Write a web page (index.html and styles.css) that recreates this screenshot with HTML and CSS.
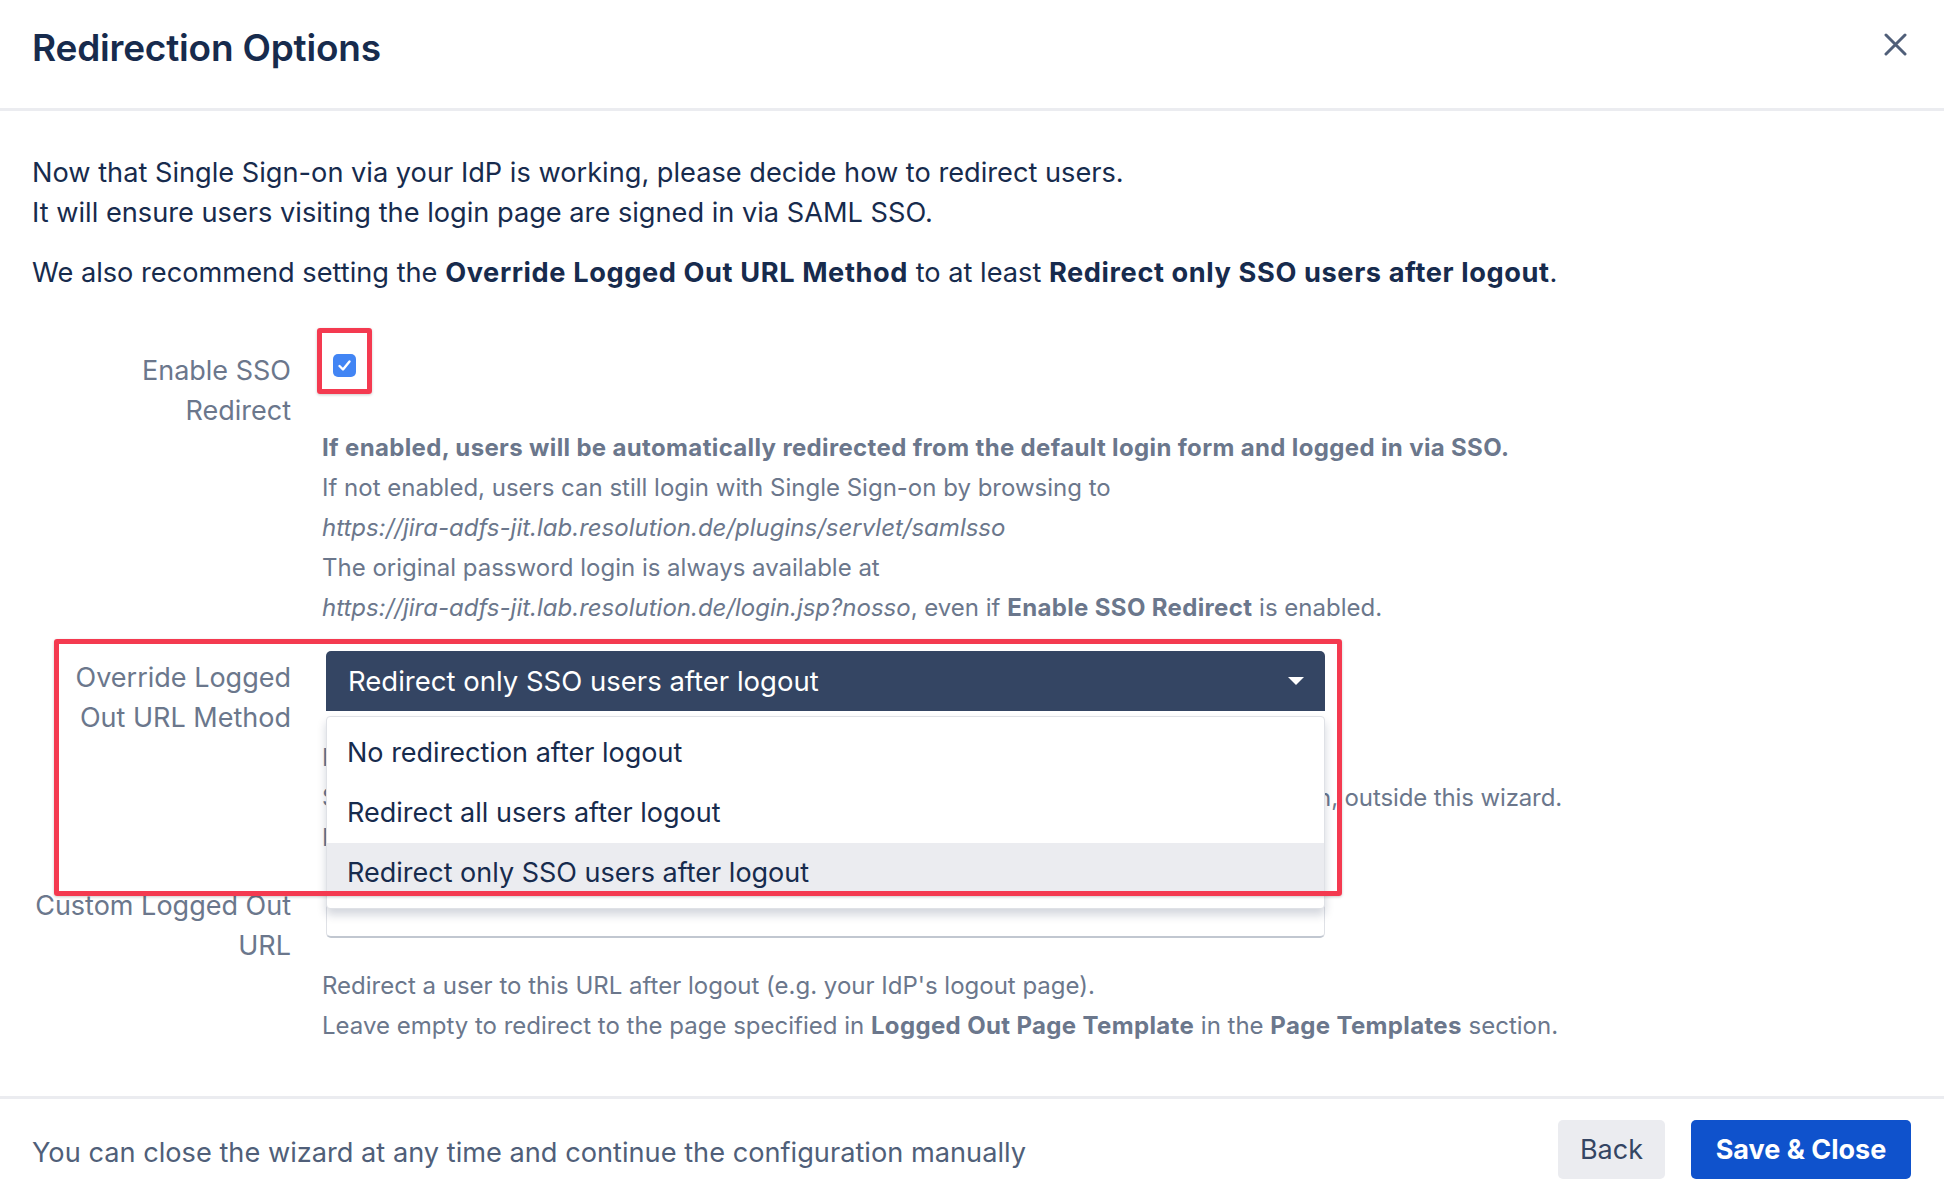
FILE: index.html
```html
<!DOCTYPE html>
<html lang="en">
  <head>
    <meta charset="UTF-8" />
    <meta name="viewport" content="width=device-width, initial-scale=1.0" />
    <title>Redirection Options</title>
    <link rel="stylesheet" href="styles.css">
  </head>
  <body>
    <div class="modal">
      <header class="modal-header">
        <h1 class="modal-title">Redirection Options</h1>
        <button class="close-btn" type="button" aria-label="Close">
          <svg width="23" height="23" viewBox="0 0 23 23">
            <path d="M2 2 L21 21 M21 2 L2 21" stroke="#505f79" stroke-width="3" stroke-linecap="round" fill="none"/>
          </svg>
        </button>
      </header>

      <div class="modal-body">
        <p class="intro">Now that Single Sign-on via your IdP is working, please decide how to redirect users.<br>It will ensure users visiting the login page are signed in via SAML SSO.</p>
        <p class="intro">We also recommend setting the <b>Override Logged Out URL Method</b> to at least <b>Redirect only SSO users after logout</b>.</p>

        <form class="form">
          <div class="field-row row-sso">
            <label class="field-label">Enable SSO<br>Redirect</label>
            <div class="field-body">
              <span class="cb-wrap">
                <span class="cb">
                  <svg width="23" height="23" viewBox="0 0 23 23">
                    <path d="M6.5 12 L10 15.5 L16.5 7.5" stroke="#fff" stroke-width="2.4" stroke-linecap="round" stroke-linejoin="round" fill="none"/>
                  </svg>
                </span>
              </span>
              <p class="help"><b>If enabled, users will be automatically redirected from the default login form and logged in via SSO.</b><br>If not enabled, users can still login with Single Sign-on by browsing to<br><i>https://jira-adfs-jit.lab.resolution.de/plugins/servlet/samlsso</i><br>The original password login is always available at<br><i>https://jira-adfs-jit.lab.resolution.de/login.jsp?nosso</i>, even if <b>Enable SSO Redirect</b> is enabled.</p>
            </div>
          </div>

          <div class="field-row row-override">
            <label class="field-label">Override Logged<br>Out URL Method</label>
            <div class="field-body">
              <div class="select-wrap">
                <div class="select">
                  <span>Redirect only SSO users after logout</span>
                  <svg width="16" height="8" viewBox="0 0 16 8"><polygon points="0,0 16,0 8,8" fill="#fff"/></svg>
                </div>
                <ul class="menu">
                  <li class="menu-item">No redirection after logout</li>
                  <li class="menu-item">Redirect all users after logout</li>
                  <li class="menu-item is-active">Redirect only SSO users after logout</li>
                </ul>
              </div>
              <p class="help help-under">If set, users are redirected to the Custom Logged Out URL below after logout.<br><span class="tight">Select No redirection to use the Logged Out Page Template in the Page Templates section, outside this wizard.</span><br>In most cases, Redirect only SSO users after logout is the recommended setting here.</p>
            </div>
            <div class="highlight"></div>
          </div>

          <div class="field-row row-custom">
            <label class="field-label">Custom Logged Out<br>URL</label>
            <div class="field-body">
              <div class="text-input"></div>
              <p class="help help-under">Redirect a user to this URL after logout (e.g. your IdP's logout page).<br>Leave empty to redirect to the page specified in <b>Logged Out Page Template</b> in the <b>Page Templates</b> section.</p>
            </div>
          </div>
        </form>
      </div>

      <footer class="modal-footer">
        <span class="footer-note">You can close the wizard at any time and continue the configuration manually</span>
        <div class="actions">
          <button class="btn btn-back" type="button">Back</button>
          <button class="btn btn-save" type="button">Save &amp; Close</button>
        </div>
      </footer>
    </div>
  </body>
</html>
```

FILE: styles.css
```css
*, *::before, *::after { box-sizing: border-box; }
body {
  margin: 0;
  font-family: Inter, "Noto Sans", sans-serif;
  background: #fff;
  color: #172b4d;
}
.modal {
  width: 1944px;
  height: 1194px;
  display: flex;
  flex-direction: column;
  overflow: hidden;
}

/* header */
.modal-header {
  height: 111px;
  border-bottom: 3px solid #ebecf0;
  display: flex;
  justify-content: space-between;
  align-items: flex-start;
  padding: 25px 37px 0 32px;
}
.modal-title {
  margin: 0;
  font-size: 37px;
  line-height: 46px;
  font-weight: 600;
  letter-spacing: -0.2px;
}
.close-btn {
  border: 0;
  background: none;
  padding: 0;
  margin-top: 8px;
  width: 23px;
  height: 23px;
  cursor: pointer;
}
.close-btn svg { display: block; }

/* body */
.modal-body {
  flex: 1;
  padding: 42px 32px 0;
}
.intro {
  margin: 0 0 20px;
  font-size: 27.2px;
  line-height: 40px;
}
.intro b {
  font-weight: 700;
  letter-spacing: 0.6px;
}
.form { margin-top: 58px; }
.field-row {
  display: flex;
  gap: 31px;
  position: relative;
}
.field-label {
  width: 259px;
  flex-shrink: 0;
  text-align: right;
  white-space: nowrap;
  font-size: 27px;
  line-height: 40px;
  color: #6b778c;
}
.field-body { flex: 1; }
.help {
  margin: 51px 0 0;
  font-size: 24px;
  line-height: 40px;
  color: #6b778c;
  white-space: nowrap;
}
.help b {
  font-weight: 700;
  letter-spacing: 0.35px;
}
.help-under { margin-top: 27px; }
.tight { letter-spacing: -0.12px; }

/* checkbox */
.cb-wrap {
  position: relative;
  display: block;
  width: 23px;
  height: 23px;
  margin: 3px 0 0 11px;
}
.cb {
  display: block;
  width: 23px;
  height: 23px;
  border-radius: 5px;
  background: #4285f4;
}
.cb svg { display: block; }
.cb-wrap::after {
  content: "";
  position: absolute;
  left: -16px;
  top: -26px;
  width: 55px;
  height: 66px;
  border: 5px solid #f43a50;
  border-radius: 3px;
  box-shadow: 0 1px 3px rgba(0, 0, 0, 0.2);
}

/* override row */
.row-override {
  margin-top: 23px;
  z-index: 2;
}
.row-override .field-label { padding-top: 7px; }
.select-wrap {
  position: relative;
  width: 999px;
  margin-left: 4px;
}
.select {
  height: 60px;
  background: #344563;
  color: #fff;
  border-radius: 5px 5px 0 0;
  display: flex;
  align-items: center;
  justify-content: space-between;
  padding: 0 21px 0 22px;
  font-size: 27.5px;
}
.menu {
  position: absolute;
  top: 65px;
  left: 0;
  width: 100%;
  margin: 0;
  padding: 6px 0 13px;
  list-style: none;
  background: #fff;
  border: 1px solid #dfe1e6;
  border-radius: 4px;
  box-shadow: 0 6px 10px rgba(9, 30, 66, 0.18);
}
.menu-item {
  height: 60px;
  line-height: 60px;
  padding-left: 20px;
  font-size: 27px;
  color: #172b4d;
  overflow: hidden;
}
.menu-item.is-active {
  background: #ebecf0;
  height: 52px;
}
.highlight {
  position: absolute;
  left: 22px;
  top: -12px;
  width: 1288px;
  height: 257px;
  border: 5px solid #f43a50;
  border-radius: 3px;
  box-shadow: 0 1px 3px rgba(0, 0, 0, 0.2);
  pointer-events: none;
}

/* custom url row */
.row-custom { margin-top: 20px; }
.row-custom .field-label { padding-top: 8px; }
.row-custom .help-under { margin-top: 28px; }
.text-input {
  width: 999px;
  height: 60px;
  margin-left: 4px;
  border: 1px solid #dfe1e6;
  border-bottom: 2px solid #c1c7d0;
  border-radius: 5px;
}

/* footer */
.modal-footer {
  height: 98px;
  border-top: 3px solid #ebecf0;
  display: flex;
  justify-content: space-between;
  align-items: flex-start;
  padding: 21px 33px 0 32px;
}
.footer-note {
  margin-top: 13px;
  font-size: 27.2px;
  line-height: 40px;
  color: #505f79;
}
.actions {
  display: flex;
  gap: 26px;
}
.btn {
  height: 59px;
  border: 0;
  border-radius: 5px;
  font-family: inherit;
  font-size: 27px;
  cursor: pointer;
}
.btn-back {
  width: 107px;
  background: #ebecf0;
  color: #344563;
}
.btn-save {
  width: 220px;
  background: #0f52cc;
  color: #fff;
  font-weight: 700;
}
```
